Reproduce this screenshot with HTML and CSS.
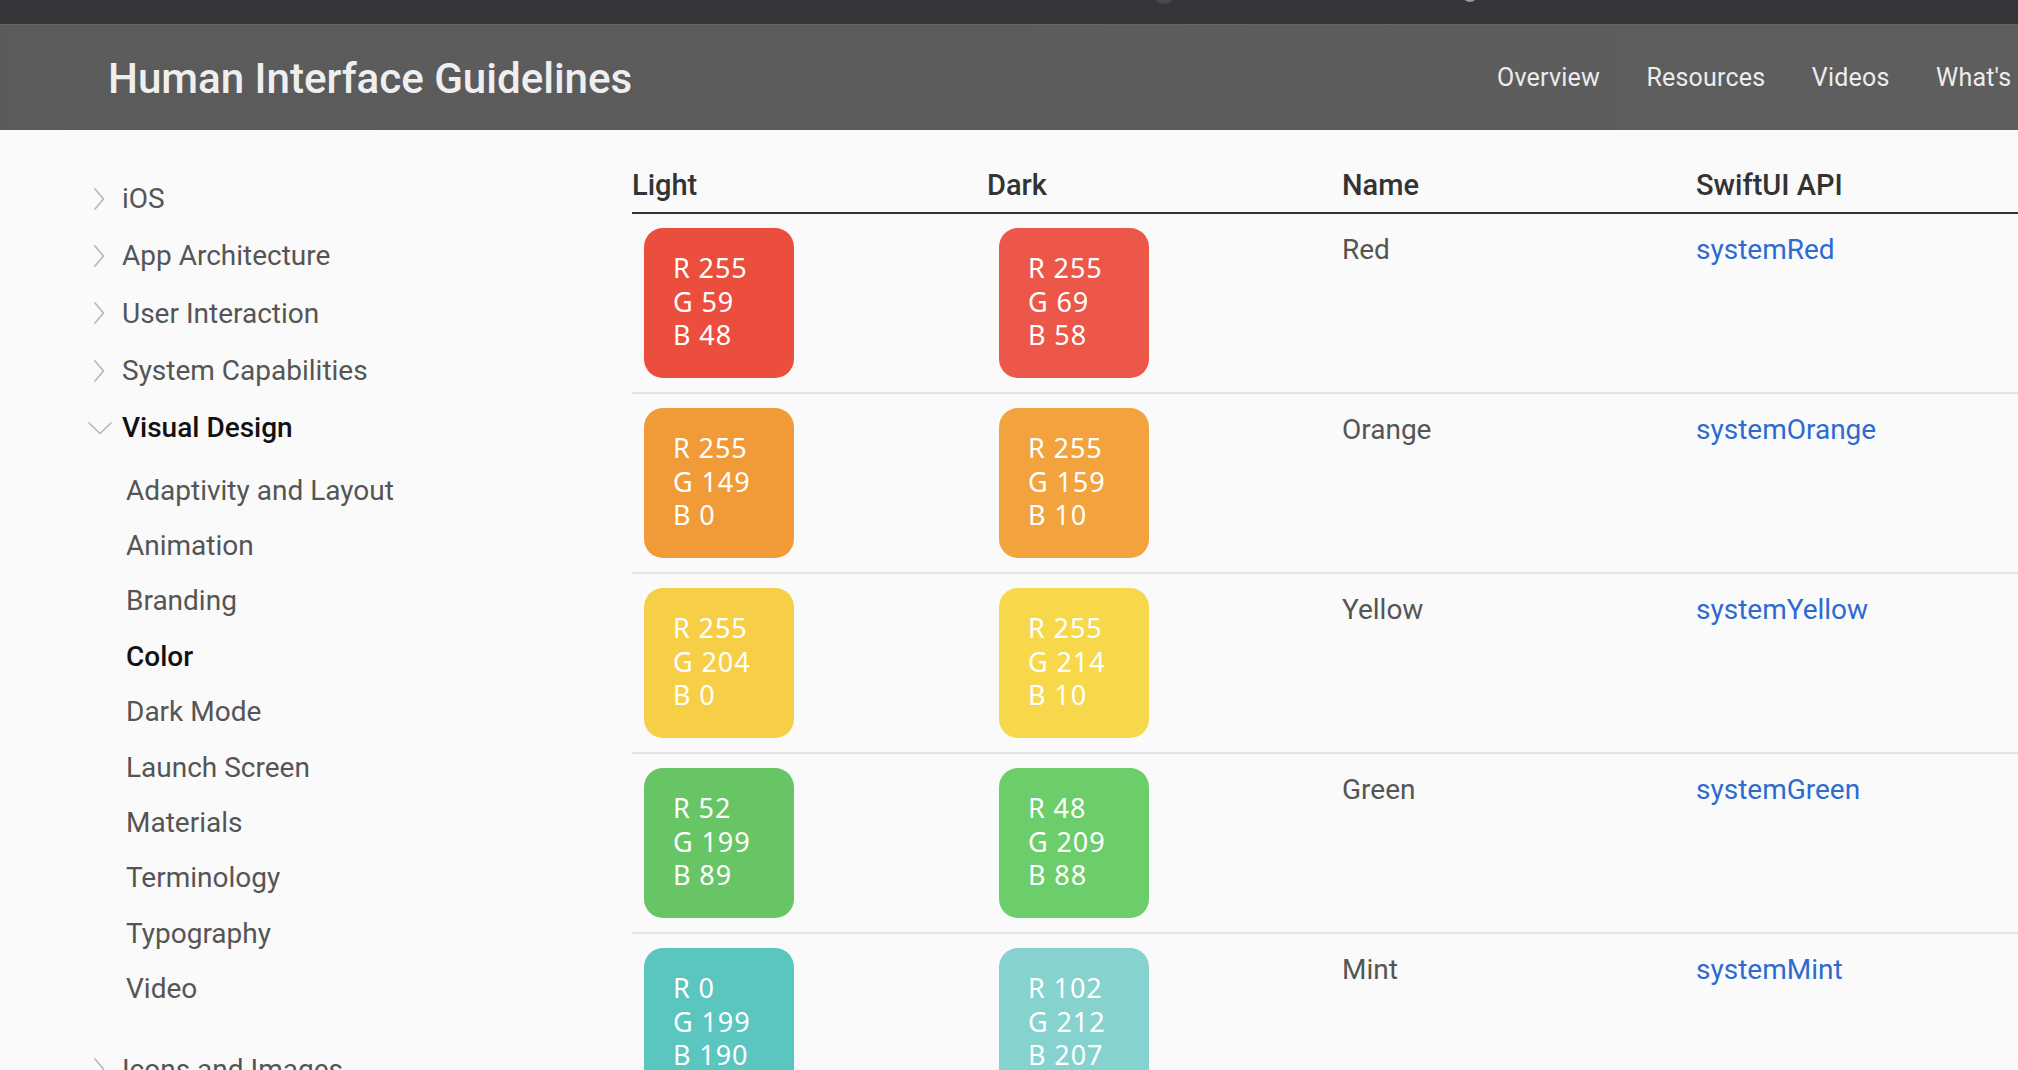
FILE: index.html
```html
<!DOCTYPE html>
<html lang="en">
<head>
<meta charset="utf-8">
<title>Color - Visual Design - Human Interface Guidelines</title>
<link rel="stylesheet" href="styles.css">
</head>
<body>
<div class="topbar"><span class="blob blob-a"></span><span class="blob blob-b"></span></div>
<header class="hero">
  <h1 class="title">Human Interface Guidelines</h1>
  <nav class="nav">
    <a class="nav-link">Overview</a>
    <a class="nav-link">Resources</a>
    <a class="nav-link">Videos</a>
    <a class="nav-link">What's New</a>
  </nav>
</header>
<div class="page">
  <aside class="sidebar">
    <ul class="tree">
      <li class="node"><span class="chev"><svg width="14" height="24" viewBox="0 0 14 24"><path d="M3 2 L11.5 12 L3 22" /></svg></span><span>iOS</span></li>
      <li class="node"><span class="chev"><svg width="14" height="24" viewBox="0 0 14 24"><path d="M3 2 L11.5 12 L3 22" /></svg></span><span>App Architecture</span></li>
      <li class="node"><span class="chev"><svg width="14" height="24" viewBox="0 0 14 24"><path d="M3 2 L11.5 12 L3 22" /></svg></span><span>User Interaction</span></li>
      <li class="node"><span class="chev"><svg width="14" height="24" viewBox="0 0 14 24"><path d="M3 2 L11.5 12 L3 22" /></svg></span><span>System Capabilities</span></li>
      <li class="node node-open"><span class="chev chev-down"><svg width="26" height="14" viewBox="0 0 26 14"><path d="M2 2 L13 12.5 L24 2" /></svg></span><span>Visual Design</span></li>
    </ul>
    <ul class="sublist">
      <li class="leaf">Adaptivity and Layout</li>
      <li class="leaf">Animation</li>
      <li class="leaf">Branding</li>
      <li class="leaf leaf-current">Color</li>
      <li class="leaf">Dark Mode</li>
      <li class="leaf">Launch Screen</li>
      <li class="leaf">Materials</li>
      <li class="leaf">Terminology</li>
      <li class="leaf">Typography</li>
      <li class="leaf">Video</li>
    </ul>
    <ul class="tree">
      <li class="node"><span class="chev"><svg width="14" height="24" viewBox="0 0 14 24"><path d="M3 2 L11.5 12 L3 22" /></svg></span><span>Icons and Images</span></li>
    </ul>
  </aside>
  <main class="content">
    <div class="thead">
      <div class="th">Light</div>
      <div class="th">Dark</div>
      <div class="th">Name</div>
      <div class="th">SwiftUI API</div>
    </div>
    <div class="trow">
      <div class="cell"><div class="swatch red-l"><span>R 255</span><span>G 59</span><span>B 48</span></div></div>
      <div class="cell"><div class="swatch red-d"><span>R 255</span><span>G 69</span><span>B 58</span></div></div>
      <div class="cell cell-text">Red</div>
      <div class="cell cell-text"><a class="api">systemRed</a></div>
    </div>
    <div class="trow">
      <div class="cell"><div class="swatch orange-l"><span>R 255</span><span>G 149</span><span>B 0</span></div></div>
      <div class="cell"><div class="swatch orange-d"><span>R 255</span><span>G 159</span><span>B 10</span></div></div>
      <div class="cell cell-text">Orange</div>
      <div class="cell cell-text"><a class="api">systemOrange</a></div>
    </div>
    <div class="trow">
      <div class="cell"><div class="swatch yellow-l"><span>R 255</span><span>G 204</span><span>B 0</span></div></div>
      <div class="cell"><div class="swatch yellow-d"><span>R 255</span><span>G 214</span><span>B 10</span></div></div>
      <div class="cell cell-text">Yellow</div>
      <div class="cell cell-text"><a class="api">systemYellow</a></div>
    </div>
    <div class="trow">
      <div class="cell"><div class="swatch green-l"><span>R 52</span><span>G 199</span><span>B 89</span></div></div>
      <div class="cell"><div class="swatch green-d"><span>R 48</span><span>G 209</span><span>B 88</span></div></div>
      <div class="cell cell-text">Green</div>
      <div class="cell cell-text"><a class="api">systemGreen</a></div>
    </div>
    <div class="trow">
      <div class="cell"><div class="swatch mint-l"><span>R 0</span><span>G 199</span><span>B 190</span></div></div>
      <div class="cell"><div class="swatch mint-d"><span>R 102</span><span>G 212</span><span>B 207</span></div></div>
      <div class="cell cell-text">Mint</div>
      <div class="cell cell-text"><a class="api">systemMint</a></div>
    </div>
  </main>
</div>
</body>
</html>
```
FILE: styles.css
```css
* { box-sizing: border-box; }
html, body {
  margin: 0;
  padding: 0;
  overflow: hidden;
  background: #fafafa;
  font-family: Roboto, "Liberation Sans", sans-serif;
}
ul { list-style: none; margin: 0; padding: 0; }

.topbar {
  position: relative;
  height: 24px;
  background: #35363a;
  overflow: hidden;
}
.blob {
  position: absolute;
  border-radius: 50%;
}
.blob-a { left: 1153px; top: -18px; width: 22px; height: 22px; background: #48494d; }
.blob-b { left: 1462px; top: -14px; width: 16px; height: 16px; background: #9a9b9e; }

.hero {
  height: 106px;
  display: flex;
  align-items: center;
  padding-left: 108px;
  background: linear-gradient(90deg, #5b5b5b 0%, #5c5c5c 60%, #5e5e5e 100%);
  border-top: 1px solid #656565;
  white-space: nowrap;
}
.title {
  flex: 0 0 1389px;
  margin: 0;
  font-size: 42.2px;
  font-weight: 500;
  color: #efefef;
  letter-spacing: -0.05px;
  padding-top: 2px;
}
.nav {
  display: flex;
  gap: 46.5px;
  flex: none;
}
.nav-link {
  font-size: 25px;
  color: #ececec;
  letter-spacing: 0.2px;
}

.page {
  display: grid;
  grid-template-columns: 632px 1fr;
}

.sidebar {
  padding: 40px 0 0 90px;
  font-size: 28px;
  color: #555;
}
.node {
  height: 57.3px;
  display: flex;
  align-items: center;
}
.chev {
  width: 32px;
  display: flex;
  align-items: center;
  padding-left: 2px;
}
.chev svg path {
  fill: none;
  stroke: #b8b8b8;
  stroke-width: 1.7;
  stroke-linecap: round;
  stroke-linejoin: round;
}
.chev-down { padding-left: 0; margin-left: -3px; margin-right: 3px; }
.node-open { color: #111; font-weight: 500; }

.sublist {
  padding: 6px 0 0 36px;
  margin-bottom: 24px;
}
.leaf {
  height: 55.4px;
  display: flex;
  align-items: center;
}
.leaf-current { color: #111; font-weight: 500; }

.content {
  padding-top: 37px;
}
.thead, .trow {
  display: grid;
  grid-template-columns: 355px 355px 354px 1fr;
}
.thead {
  border-bottom: 2px solid #333;
  padding-bottom: 9px;
}
.th {
  font-size: 29px;
  line-height: 36px;
  font-weight: 500;
  color: #333;
}
.trow {
  border-bottom: 2px solid #e4e4e4;
  height: 180px;
}
.cell { padding: 14px 0 0 12px; }
.cell-text {
  padding: 20px 0 0 0;
  font-size: 28px;
  line-height: 32px;
  color: #555;
}
.api { color: #2c6bd0; }

.swatch {
  width: 150px;
  height: 150px;
  border-radius: 19px;
  padding: 23px 0 0 29px;
  display: flex;
  flex-direction: column;
  font-family: "Noto Sans", "Open Sans", sans-serif;
  font-size: 27px;
  line-height: 33.5px;
  color: #fff;
  letter-spacing: 0.9px;
}
.red-l { background: #eb4e3d; }
.red-d { background: #ec574a; }
.orange-l { background: #f19b38; }
.orange-d { background: #f3a33d; }
.yellow-l { background: #f7cf46; }
.yellow-d { background: #f8d84b; }
.green-l { background: #67c566; }
.green-d { background: #6cce6a; }
.mint-l { background: #5bc5bf; }
.mint-d { background: #86d2cf; }
```
